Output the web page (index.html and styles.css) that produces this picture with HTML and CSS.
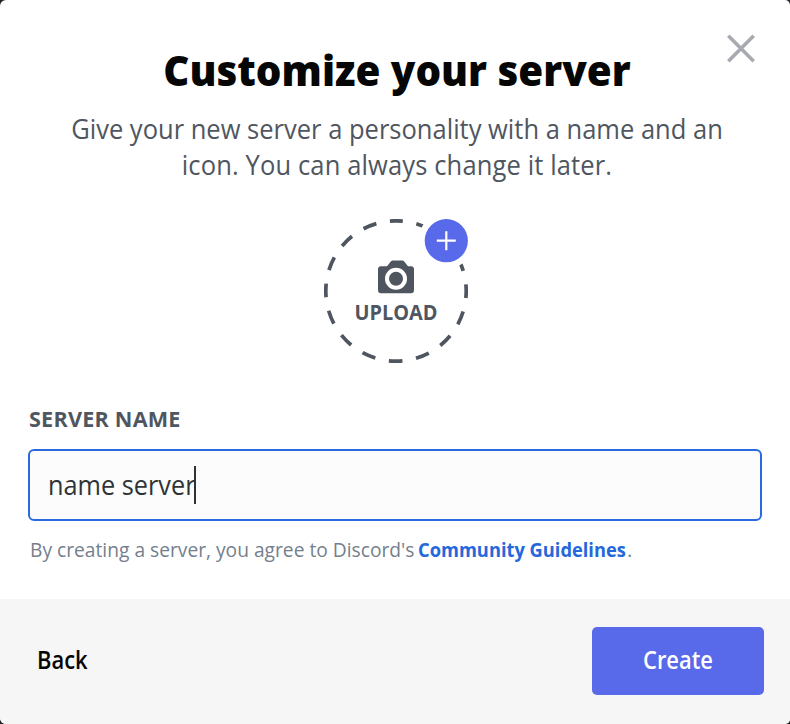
FILE: index.html
```html
<!DOCTYPE html>
<html lang="en">
<head>
<meta charset="utf-8">
<title>Customize your server</title>
<link rel="stylesheet" href="styles.css">
</head>
<body>
<div class="modal">
  <button class="close" aria-label="Close">
    <svg width="30" height="30" viewBox="0 0 30 30"><path d="M2.3 2.8 27.7 28.2M27.7 2.8 2.3 28.2"/></svg>
  </button>
  <header class="header">
    <h1 class="title">Customize your server</h1>
    <p class="subtitle">Give your new server a personality with a name and an<br><span class="second-line">icon. You can always change it later.</span></p>
  </header>
  <main class="content">
    <div class="upload">
      <svg class="ring" width="144" height="144" viewBox="0 0 144 144">
        <circle class="dashes" cx="72" cy="72" r="70.2" transform="rotate(-90 72 72)"/>
        <circle class="cutout" cx="122.3" cy="21.6" r="28"/>
        <path class="camera" d="M54 50.5a3 3 0 0 1 3-3h6l4-5q.7-.8 1.7-.8h9.6q1 0 1.7.8l4 5h3a3 3 0 0 1 3 3v21a3 3 0 0 1-3 3H57a3 3 0 0 1-3-3z" transform="translate(-.0 -.3)"/>
        <circle class="lens" cx="72" cy="59.8" r="9"/>
      </svg>
      <span class="upload-label">UPLOAD</span>
      <svg class="badge" width="44" height="44" viewBox="0 0 44 44">
        <circle cx="22.3" cy="21.7" r="21.6"/>
        <path d="M12.8 21.7h19M22.3 12.2v19"/>
      </svg>
    </div>
    <label class="label">SERVER NAME</label>
    <div class="field"><span class="value">name server</span><i class="caret"></i></div>
    <p class="note"><span class="terms">By creating a server, you agree to Discord's</span><a class="link">Community Guidelines</a><span class="stop">.</span></p>
  </main>
  <footer class="footer">
    <button class="back"><span class="button-text">Back</span></button>
    <button class="create"><span class="button-text">Create</span></button>
  </footer>
</div>
</body>
</html>
```
FILE: styles.css
```css
* { box-sizing: border-box; }
body { margin: 0; background: #202124; font-family: "Open Sans", "Noto Sans", sans-serif; }
h1, p { margin: 0; }
button { border: 0; padding: 0; background: none; font: inherit; }

.modal {
  position: relative;
  display: flex;
  flex-direction: column;
  width: 790px;
  height: 724px;
  border-radius: 6px 5px 5px 6px;
  overflow: hidden;
  background: #fff;
}
.close { position: absolute; top: 33px; right: 34px; width: 30px; height: 30px; }
.close svg { display: block; }
.close path { stroke: #a7aab0; stroke-width: 3.6; }

.header { padding-top: 45px; text-align: center; white-space: nowrap; }
.title { font-size: 42px; font-weight: 800; line-height: 50px; color: #060607; transform: translateX(2px) scaleX(.96); }
.subtitle { margin-top: 16px; font-size: 27.5px; line-height: 36px; color: #4f5660; transform: translateX(2px) scaleX(.928); }
.second-line { letter-spacing: .14px; }

.content { flex: 1; padding: 36px 28px 0; }
.upload { position: relative; width: 144px; height: 144px; margin: 0 auto; left: 1px; }
.ring { display: block; }
.dashes { fill: none; stroke: #4f5660; stroke-width: 3.7; stroke-dasharray: 13.8 13.768; stroke-dashoffset: 6.9; }
.cutout { fill: #fff; }
.camera { fill: #4f5660; }
.lens { fill: none; stroke: #fff; stroke-width: 4; }
.upload-label {
  position: absolute; top: 81px; left: 0; width: 144px;
  text-align: center; font-size: 20.5px; line-height: 24px; font-weight: 700; color: #4f5660;
  transform: scaleX(.97);
}
.badge { position: absolute; top: 0; left: 100px; }
.badge circle { fill: #5869ea; }
.badge path { stroke: #fff; stroke-width: 2.2; }

.label { display: block; margin: 44px 0 0 1px; font-size: 20.5px; font-weight: 700; line-height: 24px; letter-spacing: .2px; color: #4f5660; transform: scaleX(1.055); transform-origin: left; }
.field {
  display: flex; align-items: center;
  height: 72px; margin-top: 18px; padding-left: 18px;
  border: 2px solid #2a6ae0; border-radius: 6px; background: #fcfcfc;
}
.value { width: 146px; font-size: 27px; line-height: 38px; white-space: nowrap; color: #2e3338; transform: scaleX(.937); transform-origin: left; }
.caret { width: 2px; height: 38px; background: #2e3338; }
.note { display: flex; margin: 16px 0 0 2px; font-size: 20px; line-height: 26px; white-space: nowrap; color: #747f8d; }
.terms { width: 388px; transform: scaleX(.96); transform-origin: left; }
.link { width: 209px; font-weight: 700; color: #2568db; transform: scaleX(.914); transform-origin: left; }

.footer { display: flex; justify-content: space-between; height: 125px; padding: 28px 26px 0 37px; background: #f6f6f6; font-size: 24.5px; font-weight: 600; line-height: 66px; }
.back { height: 68px; color: #060607; }
.create { width: 172px; height: 68px; border-radius: 5px; background: #5869ea; color: #fff; }
.button-text { display: block; height: 68px; transform: scaleX(.895); }
.back .button-text { transform-origin: left; }
```
